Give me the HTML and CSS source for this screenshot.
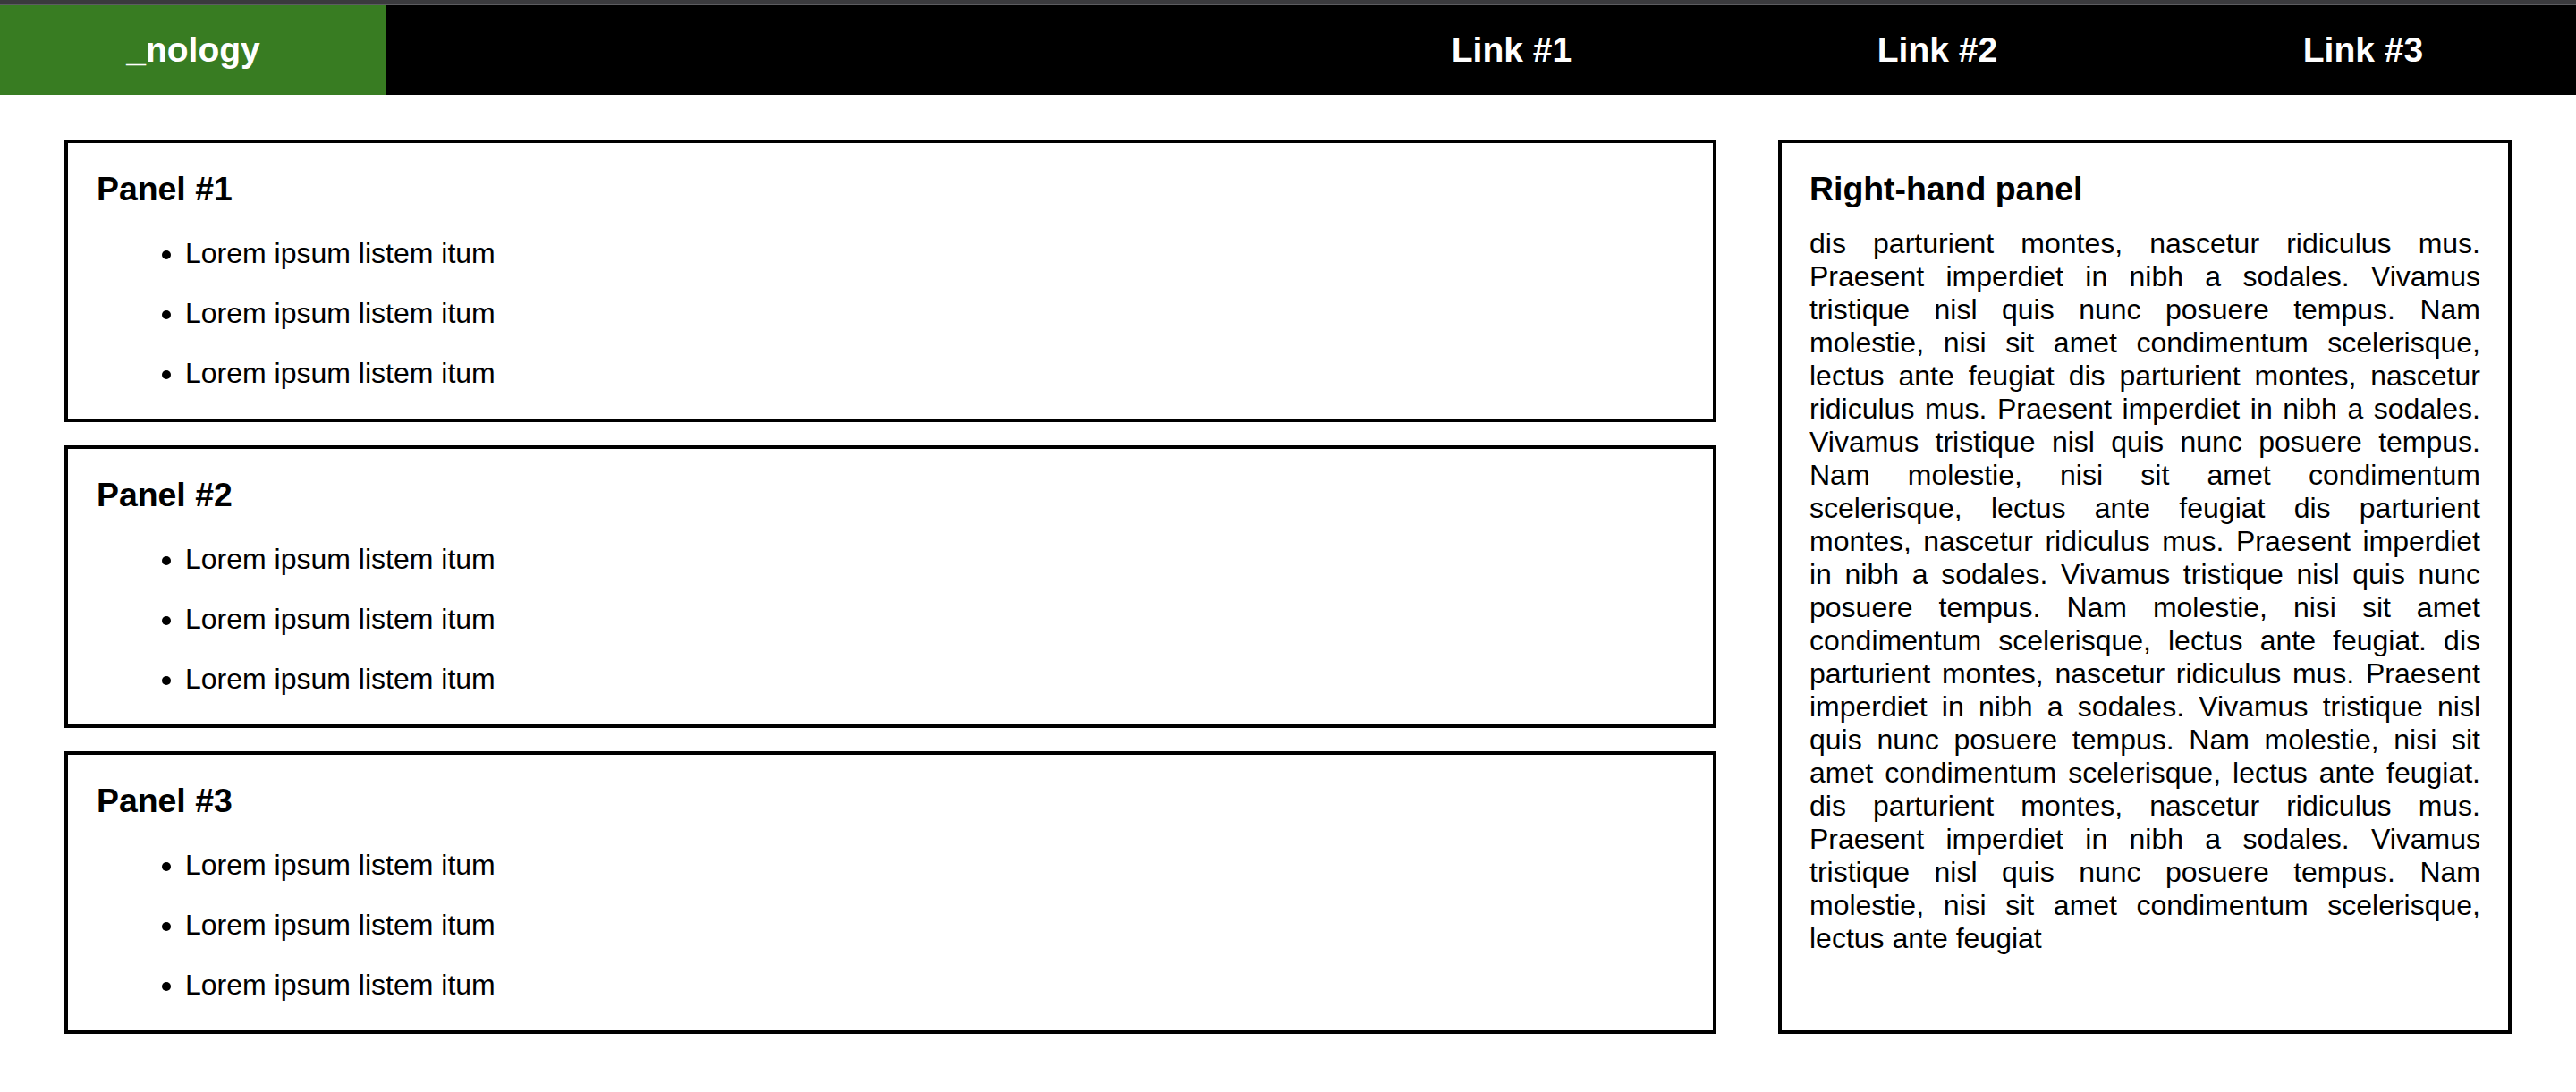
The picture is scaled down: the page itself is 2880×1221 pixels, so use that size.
FILE: index.html
```html
<!DOCTYPE html>
<html>
<head>
    <title>_nology</title>

    <link rel="stylesheet" href="styles.css">
</head>
<body>
    <div class="topline"></div>
    <nav class="navbar">
        <a class="brand" href="#">_nology</a>
        <div class="spacer"></div>
        <a class="navlink" href="#">Link #1</a>
        <a class="navlink" href="#">Link #2</a>
        <a class="navlink" href="#">Link #3</a>
    </nav>

    <main class="layout">
        <div class="column">
            <section class="panel">
                <h3>Panel #1</h3>
                <ul>
                    <li>Lorem ipsum listem itum</li>
                    <li>Lorem ipsum listem itum</li>
                    <li>Lorem ipsum listem itum</li>
                </ul>
            </section>
            <section class="panel">
                <h3>Panel #2</h3>
                <ul>
                    <li>Lorem ipsum listem itum</li>
                    <li>Lorem ipsum listem itum</li>
                    <li>Lorem ipsum listem itum</li>
                </ul>
            </section>
            <section class="panel">
                <h3>Panel #3</h3>
                <ul>
                    <li>Lorem ipsum listem itum</li>
                    <li>Lorem ipsum listem itum</li>
                    <li>Lorem ipsum listem itum</li>
                </ul>
            </section>
        </div>

        <aside class="panel side">
            <h3>Right-hand panel</h3>
            <p>dis parturient montes, nascetur ridiculus mus. Praesent imperdiet in nibh a sodales. Vivamus tristique nisl quis nunc posuere tempus. Nam molestie, nisi sit amet condimentum scelerisque, lectus ante feugiat dis parturient montes, nascetur ridiculus mus. Praesent imperdiet in nibh a sodales. Vivamus tristique nisl quis nunc posuere tempus. Nam molestie, nisi sit amet condimentum scelerisque, lectus ante feugiat dis parturient montes, nascetur ridiculus mus. Praesent imperdiet in nibh a sodales. Vivamus tristique nisl quis nunc posuere tempus. Nam molestie, nisi sit amet condimentum scelerisque, lectus ante feugiat. dis parturient montes, nascetur ridiculus mus. Praesent imperdiet in nibh a sodales. Vivamus tristique nisl quis nunc posuere tempus. Nam molestie, nisi sit amet condimentum scelerisque, lectus ante feugiat. dis parturient montes, nascetur ridiculus mus. Praesent imperdiet in nibh a sodales. Vivamus tristique nisl quis nunc posuere tempus. Nam molestie, nisi sit amet condimentum scelerisque, lectus ante feugiat</p>
        </aside>
    </main>
</body>
</html>
```

FILE: styles.css
```css
body {
    margin: 0;
    font-family: "Liberation Sans", Arial, sans-serif;
    color: #000;
    background-color: #fff;
}
.topline {
    height: 4px;
    background-color: #3a3a3d;
    border-bottom: 2px solid #5c5c60;
}
.navbar {
    display: flex;
    height: 100px;
    background-color: #000;
}
.navbar a {
    display: flex;
    align-items: center;
    justify-content: center;
    color: #fff;
    font-weight: bold;
    font-size: 39px;
    text-decoration: none;
}
.brand {
    width: 432px;
    background-color: #387c22;
}
.spacer {
    flex: 1;
}
.navlink {
    width: 476px;
}
.layout {
    display: grid;
    grid-template-columns: 1fr 820px;
    gap: 69px;
    padding: 50px 72px 0;
}
.column {
    display: flex;
    flex-direction: column;
    gap: 26px;
}
.panel {
    border: 4px solid #000;
    padding: 30px 32px 32px;
}
.panel h3 {
    margin: 0;
    font-size: 37.4px;
    line-height: 43px;
}
.panel ul {
    margin: 32px 0 0;
    padding-left: 99px;
}
.panel li {
    font-size: 32px;
    line-height: 37px;
    margin-bottom: 30px;
}
.panel li:last-child {
    margin-bottom: 0;
}
.side {
    padding: 30px 31px;
}
.side p {
    margin: 21px 0 0;
    font-size: 32px;
    line-height: 37px;
    text-align: justify;
}
```
